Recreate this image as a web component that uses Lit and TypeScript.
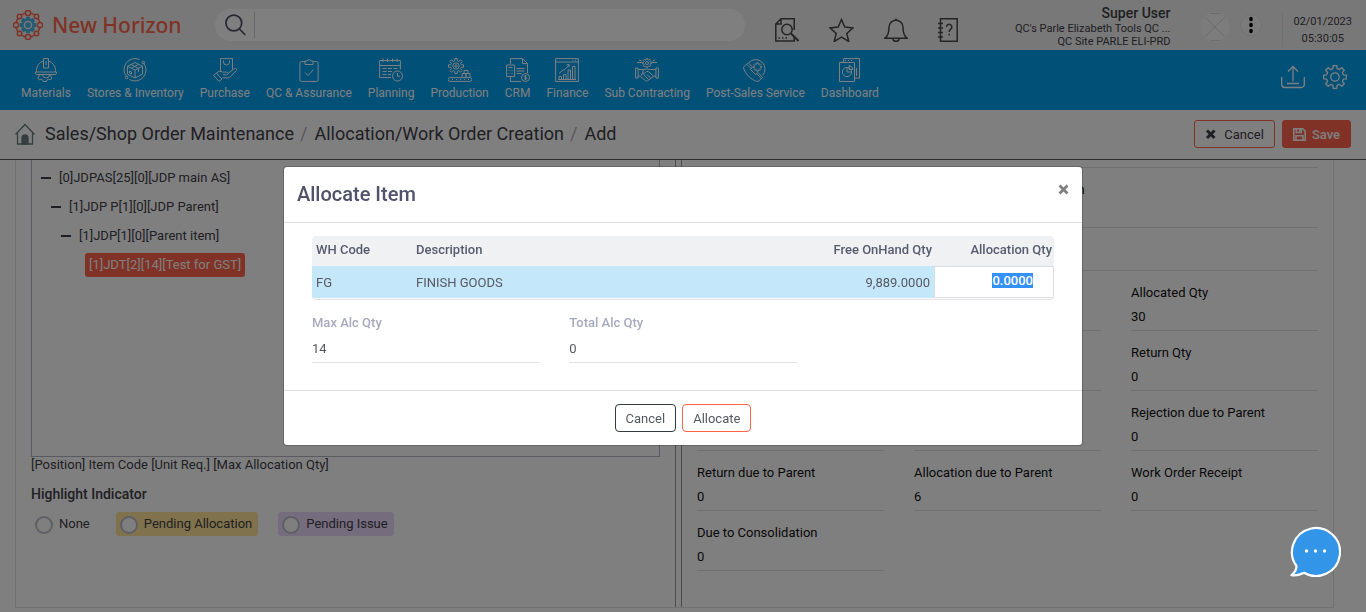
import { LitElement, html, css, svg } from "lit";
import { customElement, query } from "lit/decorators.js";

const gear = (cx: number, cy: number, r: number, teeth: number, depth: number) => {
  const pts: string[] = [];
  const step = (Math.PI * 2) / teeth;
  for (let i = 0; i < teeth; i++) {
    const a = i * step - Math.PI / 2;
    const at = (ang: number, rad: number) =>
      `${(cx + Math.cos(ang) * rad).toFixed(2)} ${(cy + Math.sin(ang) * rad).toFixed(2)}`;
    pts.push(at(a - step * 0.3, r - depth), at(a - step * 0.2, r), at(a + step * 0.2, r), at(a + step * 0.3, r - depth));
  }
  return `M${pts.join("L")}Z`;
};

const ring = (n: number, cx: number, cy: number, r: number, dot: number) =>
  Array.from({ length: n }, (_, i) => {
    const a = (i * Math.PI * 2) / n;
    return svg`<circle cx=${cx + Math.cos(a) * r} cy=${cy + Math.sin(a) * r} r=${i % 2 ? dot - 0.4 : dot}/>`;
  });

const icons: Record<string, unknown> = {
  materials: svg`<path d="M2.500 14v-1.500a9.500 9.500 0 0 1 7-9.500M14.500 3a9.500 9.500 0 0 1 7 9.500V14M1.500 14h21v1.200a1.300 1.300 0 0 1-1.300 1.300H2.800a1.300 1.300 0 0 1-1.300-1.300zM9.500.6h5v9.400h-5zM12 3v4"/><path d="M5 16.500v2.200l-1.300 1 1.500 2.200 1.800-.8 1.800 1.100.4 1.300h3.200l.4-1.300 1.800-1.100 1.900.8 1.500-2.200-1.300-1 0-2.200M8.500 16.500a3.500 3.500 0 0 0 7 0"/>`,
  stores: svg`<path d="M3.500 18.500A11 11 0 0 1 16.500 1.500M20.500 5a11 11 0 0 1-14 16.500"/><circle cx="20.300" cy="4.500" r="1.300"/><circle cx="3.700" cy="19.500" r="1.300"/><path d="M12 4.500l7.500 3.700v8L12 20l-7.500-3.800v-8zM4.500 8.200l7.500 4 7.500-4M12 12.200V20M8 6.400l7.500 4v3.600M15.600 6.300l-7.400 4M6.500 13v2l2 1v-2z"/>`,
  purchase: svg`<path d="M7.500 13V.6h12v11M10.500 2.500v1.500a3 3 0 0 0 6 0V2.500M.6 17.500l2.900-2.400 5.500 5.900-2.900 2.400zM3.500 15.100c2-2 4-2.100 6-1h4c2 0 2.200 2.500 0 2.600H10M15 15.500l6.500-5c1.500-.7 2.700.8 1.700 2l-5.700 6.300c-.8.7-1.500 1-2.500 1H9.500"/>`,
  qc: svg`<path d="M8 3.600H4.400a1.500 1.500 0 0 0-1.500 1.500v16.800a1.500 1.500 0 0 0 1.500 1.500h15.200a1.500 1.500 0 0 0 1.500-1.500V5.100a1.500 1.500 0 0 0-1.500-1.500H16M8 6.500V3h2.200a1.900 1.900 0 0 1 3.600 0H16v3.500zM8 14.500l3 3 5.500-6"/>`,
  planning: svg`<path d="M12 19.500H.6V2.500h20.800v9M.6 7.500h20.800M4 .5v3.500M8.500.5v3.500M13.500.5v3.500M18 .5v3.500M3.500 10.500h4M9 10.500h4M14.500 10.500h4M3.500 13.500h4M9 13.500h4M3.500 16.500h4M9 16.500h3"/><circle cx="18.500" cy="18" r="5"/><path d="M18.500 15v3.300h2.500"/>`,
  production: svg`<path d=${gear(8, 8, 7.6, 8, 2.2)} /><circle cx="8" cy="8" r="3.200"/><circle cx="8" cy="8" r="1.200"/><path d="M2 19.600h20a1.800 1.800 0 0 1 0 3.800H2a1.800 1.800 0 0 1 0-3.800zM14 19.500v-4h4v4M18 19.500v-4h4v4M16 15.500v-3h4v3M4 21.500h1M8 21.500h1M12 21.500h1M16 21.500h1M20 21.500h1"/>`,
  crm: svg`<path d="M4.500 6V.6h12l5 5V15M16.500.6v5h5M15 23.400H4.500V19M10.500 10.500h8M10.500 13h8M10.500 15.500h5M.6 7h8v11.500h-8zM2.500 9.500h4M2.500 12.500h1M5.500 12.500h1M2.500 15.500h1M5.500 15.500h1"/><circle cx="19.500" cy="19.500" r="4"/><path d="M20.700 18c-1.200-.9-2.500-.3-2.300.6.200 1 2.200.7 2.300 1.700 0 1-1.500 1.400-2.500.5M19.500 16.800v5.400"/>`,
  finance: svg`<path d="M.6.600h22.800v22.800H.6zM.6 4h22.800M17.500 2.300h1M20 2.300h1M3 21.500h18M4 21.500v-3h2.500v3M8.500 21.500v-5H11v5M13 21.500V12h2.500v9.500M17.500 21.500v-13H20v13M4 15.500l4-3.500 2-.5 4-4.500M11.500 6.800l2.700-.2-.2 2.700"/>`,
  sub: svg`<path d=${gear(12, 5, 4.6, 8, 1.200)} /><circle cx="12" cy="5" r="1.500"/><path d="M2 4.500h5M4 2l2.500 1M17 4.500h5M20 2l-2.500 1M.6 10h2.500v10H.6zM20.900 10h2.500v10h-2.500zM3.100 11.500h5l3.500-.5 4 .5h5.300M3.100 18h2l5.500 4.800c1 .5 1.700.2 2.400-.3l6-4.500h1.900M8.500 11.500l-1 3.500c1.500 1 3-.2 3.800-1.500h2l5.200 4.500M12 16.500l3.500 3.500M10 18l3.500 3.500M6 17l2-1.500 2 2.500"/>`,
  service: svg`<path d="M6 4.500A9.300 9.300 0 1 1 19.500 17.300M5.200 4.800L1.500 8a2.800 2.800 0 0 0-.7 3C3 16.500 8 21.500 13.500 23.300a2.800 2.800 0 0 0 2.700-.6l3.300-3.400-4.500-4.800-2.500 2-5-5L9.500 9zM3.700 6.200l4.300 4.300M13.800 15.700l4.300 4.700"/><path d=${gear(14.5, 9, 4.300, 8, 1.300)} />`,
  dashboard: svg`<path d="M1.500 4.500h15v19h-15zM5.500 4.500V.6h16v19.500h-5M18.500 10v8M7 2.500h1M10 2.500h1M13 2.500h1"/><circle cx="9" cy="14" r="4.600"/><path d="M9 9.400V14h4.600M11 7.500a5 5 0 0 1 4 4h-4z"/>`,
};

const modules: [string, string][] = [
  ["materials", "Materials"],
  ["stores", "Stores & Inventory"],
  ["purchase", "Purchase"],
  ["qc", "QC & Assurance"],
  ["planning", "Planning"],
  ["production", "Production"],
  ["crm", "CRM"],
  ["finance", "Finance"],
  ["sub", "Sub Contracting"],
  ["service", "Post-Sales Service"],
  ["dashboard", "Dashboard"],
];

const base = css`
  *, *::before, *::after { box-sizing: border-box; }
  button, input { font: inherit; color: inherit; margin: 0; }
  button { cursor: pointer; }
  a { color: inherit; text-decoration: none; }
  svg { display: block; fill: none; stroke: currentColor; }
`;

@customElement("app-header")
class AppHeader extends LitElement {
  static styles = [base, css`
    :host { display: flex; align-items: center; height: 50px; background: #f1f1f1; color: #3f4047; }
    .brand { display: flex; align-items: center; gap: 9px; padding-left: 13px; width: 215px; color: #ff644a; font: 500 21px/30px "Noto Sans", sans-serif; white-space: nowrap; }
    .search { display: flex; align-items: center; flex: 0 1 530px; height: 32px; border-radius: 16px; background: #fff; padding-left: 10px; margin-right: 30px; color: #4c4f66; }
    .search button { border: 0; background: none; padding: 0; }
    .search input { flex: 1; min-width: 0; height: 26px; margin: 0 20px 0 8px; border: 0; border-left: 1px solid #cfcfd6; background: none; outline: 0; }
    .tools { display: flex; gap: 30px; padding-top: 10px; color: #484848; }
    .tools button { padding: 0; border: 0; background: none; }
    .user { margin-left: auto; padding-top: 2px; text-align: right; font-size: 11px; line-height: 13px; white-space: nowrap; }
    .name { font-size: 14px; line-height: 18px; font-weight: 500; }
    .avatar { margin: 4px 10px 0 30px; color: #d8d8d8; }
    .menu { display: grid; place-items: center; width: 22px; height: 22px; padding: 0; border: 1px solid #e6e6e6; border-radius: 50%; background: #f6f6f6; color: #000; }
    .clock { margin-left: 20px; padding: 0 14px 0 10px; border-left: 1px solid #e2e2e2; font-size: 11px; line-height: 17px; text-align: center; margin-top: 10px; }
  `];
  render() {
    return html`
      <a class="brand" href="#">
        <svg width="30" height="30" viewBox="0 0 30 30" stroke-width="1.500">
          <circle cx="15" cy="15" r="12"/>
          <g fill="#f1f1f1">${ring(8, 15, 15, 12, 2.600)}</g>
          <g stroke="#4cb8e6"><path fill="#4cb8e6" d=${gear(15, 15, 7.600, 8, 1.500)} /><circle cx="15" cy="15" r="3.600" stroke="#f1f1f1"/></g>
        </svg>
        <span>New Horizon</span>
      </a>
      <div class="search">
        <button aria-label="Search"><svg width="21" height="22" viewBox="0 0 21 22" stroke-width="1.700"><circle cx="8.800" cy="9" r="7.900"/><path d="M14.500 15l5.800 6"/></svg></button>
        <input type="text" aria-label="Search text" />
      </div>
      <div class="tools">
        <button aria-label="Document search"><svg width="24" height="24" viewBox="0 0 24 24" stroke-width="1.500"><path d="M19.200 18v5H.8V6L6 .8h13.200V12M.8 6H6V.8M3.500 20h1.500M7 20h1.500M10.500 20H12"/><circle cx="12" cy="11.500" r="5.200"/><path d="M16 15.500l7.500 7.500" stroke-width="2"/></svg></button>
        <button aria-label="Favourites"><svg width="25" height="24" viewBox="0 0 25 24" stroke-width="1.500"><path d="M12.500 1.500l3.300 7.600 8.200.8-6.200 5.500 1.900 8-7.200-4.300-7.200 4.300 1.900-8L1 9.900l8.200-.8z"/></svg></button>
        <button aria-label="Notifications"><svg width="24" height="24" viewBox="0 0 24 24" stroke-width="1.500"><path d="M1 20.200h22c-3-2.500-4-5-4-11a7 7 0 0 0-14 0c0 6-1 8.500-4 11zM9 20.500a3 2.800 0 0 0 6 0M11 1.500h2"/></svg></button>
        <button aria-label="Help"><svg width="24" height="24" viewBox="0 0 24 24" stroke-width="1.500"><path d="M2.500.8h16.700v22.400H2.500zM0 5.500h5M0 10h5M0 14.500h5M0 19h5M8.500 9a2.700 2.700 0 1 1 4.200 2.200c-1.200.8-1.500 1.300-1.500 2.800M11.200 15.800v1.700"/></svg></button>
      </div>
      <div class="user">
        <div class="name">Super User</div>
        <div>QC's Parle Elizabeth Tools QC ...</div>
        <div>QC Site PARLE ELI-PRD</div>
      </div>
      <svg class="avatar" width="30" height="30" viewBox="0 0 30 30"><circle cx="15" cy="15" r="14.500" fill="#f8f8f8" stroke="#f8f8f8"/><path d="M5 5l20 20M25 5L5 25M10 1.500h10M10 28.500h10"/></svg>
      <button class="menu" aria-label="More"><svg width="4" height="18" viewBox="0 0 4 18"><g stroke="none" fill="#000"><ellipse cx="2" cy="3" rx="1.800" ry="2.200"/><ellipse cx="2" cy="9" rx="1.800" ry="2.200"/><ellipse cx="2" cy="15" rx="1.800" ry="2.200"/></g></svg></button>
      <div class="clock"><div>02/01/2023</div><div>05:30:05</div></div>
    `;
  }
}

@customElement("app-nav")
class AppNav extends LitElement {
  static styles = [base, css`
    :host { display: flex; height: 60px; padding: 0 19px 0 21px; background: #00a0f0; color: #fff; }
    nav { display: flex; gap: 16px; padding-top: 8px; }
    .item { display: flex; flex-direction: column; align-items: center; gap: 3px; font-size: 12px; line-height: 16px; white-space: nowrap; }
    .side { display: flex; align-items: center; gap: 18px; margin-left: auto; padding-bottom: 6px; }
    .side button { padding: 0; border: 0; background: none; }
  `];
  render() {
    return html`
      <nav>
        ${modules.map(([icon, label]) => html`
          <a class="item" href="#">
            <svg width="24" height="24" viewBox="0 0 24 24">${icons[icon]}</svg>
            <span>${label}</span>
          </a>`)}
      </nav>
      <div class="side">
        <button aria-label="Upload"><svg width="24" height="24" viewBox="0 0 24 24" stroke-width="1.300"><path d="M.7 12v7.500a3 3 0 0 0 3 3h16.600a3 3 0 0 0 3-3V12M12 16.500V1.500M7 6.500l5-5 5 5M6 18.500h12"/></svg></button>
        <button aria-label="Settings"><svg width="24" height="24" viewBox="0 0 24 24" stroke-width="1.300" stroke-linejoin="round"><path d=${gear(12, 12, 11.500, 8, 2.800)} /><circle cx="12" cy="12" r="4.200"/></svg></button>
      </div>
    `;
  }
}

@customElement("app-title-bar")
class AppTitleBar extends LitElement {
  static styles = [base, css`
    :host { display: flex; align-items: center; height: 50px; padding: 0 15px 1px; background: #fff; border-bottom: 1px solid #5a5a5a; color: #3f4047; }
    .home { margin-right: 10px; color: #6b7c80; }
    .crumbs { display: flex; gap: 6px; margin: 0; padding: 0; list-style: none; font-size: 18px; line-height: 24px; white-space: nowrap; }
    .crumbs li { display: flex; gap: 7px; }
    .crumbs li + li::before { content: "/"; color: #b0b0b8; }
    .actions { display: flex; gap: 7px; margin-left: auto; }
    .btn { display: flex; align-items: center; gap: 8px; height: 28px; padding: 1px 10px 0; border: 1px solid #ff644a; border-radius: 3px; background: #fff; font-size: 13px; }
    .primary { background: #ff644a; color: #fff; font-weight: 500; gap: 6px; }
  `];
  render() {
    return html`
      <a class="home" href="#" aria-label="Home"><svg width="20" height="22" viewBox="0 0 20 22" stroke-width="1.300"><path d="M.5 11.500L10 1.500l9.500 10M2.500 10v11h15V10"/><path d="M7 21v-6a3 3 0 0 1 6 0v6z" fill="#6b7c80"/></svg></a>
      <ol class="crumbs">
        <li><a href="#">Sales/Shop Order Maintenance</a></li>
        <li><a href="#">Allocation/Work Order Creation</a></li>
        <li>Add</li>
      </ol>
      <div class="actions">
        <button class="btn"><svg width="11" height="11" viewBox="0 0 11 11" stroke-width="3"><path d="M2 1.500l7.500 7.500M9.500 1.500L2 9"/></svg>Cancel</button>
        <button class="btn primary"><svg width="13" height="13" viewBox="0 0 13 13" stroke-width="1.600"><path d="M.8.800h9l2.400 2.400v9H.8zM3.300 1v3.500h5V1M3 12V7.800h7V12M6.800 1.500v2"/></svg>Save</button>
      </div>
    `;
  }
}

@customElement("order-workspace")
class OrderWorkspace extends LitElement {
  static styles = [base, css`
    :host { display: block; padding: 0 32px 4px 15px; background: #fff; color: #3f4047; }
    .panel { display: grid; grid-template-columns: 661fr 658fr; height: 100%; min-height: 448px; border: 1px solid #e0e1e6; border-top: 0; }
    .left { border-right: 1px solid #9a9a9a; padding: 0 15px; }
    .right { margin-left: 5px; border-left: 1px solid #9a9a9a; padding: 0 15px; color: #111; }
    .tree { height: 297px; margin: 0; padding: 3px 9px; border: 1px solid #b4b5c0; border-top: 0; list-style: none; }
    .node { display: flex; align-items: center; gap: 8px; height: 29px; }
    .l1 { padding-left: 10px; }
    .l2 { padding-left: 20px; }
    .l3 { padding-left: 44px; }
    .toggle { width: 10px; height: 10px; padding: 0; border: 0; background: linear-gradient(currentColor, currentColor) center / 10px 2px no-repeat; }
    .picked { height: 24px; padding: 0 4px; border-radius: 3px; background: #ff644a; color: #fff; line-height: 24px; }
    .hint { line-height: 16px; }
    .legend { padding: 0; margin: 0; font-size: 14px; line-height: 20px; font-weight: 500; }
    fieldset { margin: 11px 0 0; padding: 0; border: 0; }
    .options { display: flex; gap: 20px; padding-top: 8px; }
    .option { display: flex; align-items: center; gap: 6px; height: 24px; padding: 0 6px 0 4px; border-radius: 3px; }
    .allocation { background: #ffe599; }
    .issue { background: #ead8fa; }
    .option input { appearance: none; width: 18px; height: 18px; margin-top: 1px; border: 2px solid #bdbec8; border-radius: 50%; background: #fff; }
    .fields { display: grid; grid-template-columns: repeat(3, 1fr); column-gap: 30px; }
    .field { height: 60px; padding-top: 13px; border-bottom: 1px solid #e0e0e4; line-height: 18px; }
    .field output { display: block; margin-top: 6px; }
    .wide { grid-column: span 2; }
    .edge { height: 8px; border-bottom: 1px solid #e0e0e4; }
    .group { height: 43px; border-bottom: 1px solid #e0e0e4; }
  `];
  private field(label: string, value: string, cls = "") {
    if (!label) return html`<div class="field"></div>`;
    const id = label.toLowerCase().replace(/\W+/g, "-");
    return html`<div class="field ${cls}"><label for=${id}>${label}</label><output id=${id}>${value}</output></div>`;
  }
  render() {
    return html`
      <div class="panel">
        <section class="left">
          <ul class="tree">
            <li class="node"><button class="toggle" aria-label="Collapse"></button>[0]JDPAS[25][0][JDP main AS]</li>
            <li class="node l1"><button class="toggle" aria-label="Collapse"></button>[1]JDP P[1][0][JDP Parent]</li>
            <li class="node l2"><button class="toggle" aria-label="Collapse"></button>[1]JDP[1][0][Parent item]</li>
            <li class="node l3"><span class="picked">[1]JDT[2][14][Test for GST]</span></li>
          </ul>
          <div class="hint">[Position] Item Code [Unit Req.] [Max Allocation Qty]</div>
          <fieldset>
            <legend class="legend">Highlight Indicator</legend>
            <div class="options">
              <label class="option"><input type="radio" name="hl" />None</label>
              <label class="option allocation"><input type="radio" name="hl" />Pending Allocation</label>
              <label class="option issue"><input type="radio" name="hl" />Pending Issue</label>
            </div>
          </fieldset>
        </section>
        <section class="right">
          <div class="edge"></div>
          <div class="fields">
            ${this.field("", "")}
            ${this.field("Quantity due to Consolidation", "", "wide")}
          </div>
          <div class="group"></div>
          <div class="fields">
            ${this.field("", "")}
            ${this.field("", "")}
            ${this.field("Allocated Qty", "30")}
            ${this.field("", "")}
            ${this.field("", "")}
            ${this.field("Return Qty", "0")}
            ${this.field("", "")}
            ${this.field("", "")}
            ${this.field("Rejection due to Parent", "0")}
            ${this.field("Return due to Parent", "0")}
            ${this.field("Allocation due to Parent", "6")}
            ${this.field("Work Order Receipt", "0")}
            ${this.field("Due to Consolidation", "0")}
          </div>
        </section>
      </div>
    `;
  }
}

@customElement("allocate-dialog")
class AllocateDialog extends LitElement {
  @query(".qty") qty!: HTMLInputElement;
  static styles = [base, css`
    :host { position: fixed; inset: 0; display: flex; align-items: center; justify-content: center; padding-bottom: 1px; background: rgba(0, 0, 0, 0.5); color: #575962; }
    .dialog { width: 100%; max-width: 800px; border: 1px solid rgba(0, 0, 0, 0.2); border-radius: 4px; background: #fff; background-clip: padding-box; }
    header { display: flex; justify-content: space-between; height: 56px; padding: 13px; border-bottom: 1px solid #dfe0e8; }
    h2 { margin: 0; font-size: 20px; line-height: 28px; font-weight: 500; color: #50526a; }
    .close { align-self: start; height: 20px; padding: 0; border: 0; background: none; color: #808080; }
    .body { padding: 13px 28px 27px; }
    .grid { border-bottom: 1px solid #e2e3e6; border-radius: 4px; overflow: hidden; padding-bottom: 1px; }
    table { width: 100%; border-collapse: collapse; table-layout: fixed; }
    th { height: 30px; padding: 0 4px 2px; background: #f0f1f3; color: #575b70; font-weight: 500; text-align: left; }
    td { height: 32px; padding: 2px 4px 0; background: #c4e7fa; }
    .code { width: 100px; }
    .edit { width: 120px; }
    th.num { text-align: right; padding-right: 2px; }
    td.num { text-align: right; }
    td.cell { padding: 0; background: #fff; }
    .qty { display: block; width: 100%; height: 32px; padding: 0 20px 2px 4px; border: 1px solid #dcdde0; background: #fff; text-align: right; font-weight: 500; outline: 0; }
    .qty::selection { background: #3390ff; color: #fff; }
    .fields { display: grid; grid-template-columns: repeat(3, 1fr); column-gap: 30px; padding-top: 14px; }
    .field { height: 49px; border-bottom: 1px solid #e0e1e5; line-height: 18px; }
    .field label { display: block; color: #a7aabf; font-weight: 500; }
    .field output { display: block; margin-top: 8px; }
    footer { display: flex; justify-content: center; gap: 6px; padding: 13px; border-top: 1px solid #dfe0e8; }
    .btn { height: 28px; padding: 2px 10px 0; border: 1px solid #343a40; border-radius: 4px; background: #fff; }
    .accent { border-color: #ff644a; }
  `];
  firstUpdated() {
    this.qty.focus();
    this.qty.select();
  }
  render() {
    return html`
      <div class="dialog" role="dialog" aria-labelledby="t">
        <header>
          <h2 id="t">Allocate Item</h2>
          <button class="close" aria-label="Close"><svg width="11" height="11" viewBox="0 0 11 11" stroke-width="2.800"><path d="M1.500 1.500l8 8M9.500 1.500l-8 8"/></svg></button>
        </header>
        <div class="body">
          <div class="grid">
            <table>
              <thead><tr><th class="code">WH Code</th><th>Description</th><th class="num">Free OnHand Qty</th><th class="num edit">Allocation Qty</th></tr></thead>
              <tbody><tr><td>FG</td><td>FINISH GOODS</td><td class="num">9,889.0000</td><td class="cell"><input class="qty" type="text" aria-label="Allocation Qty" value="0.0000" /></td></tr></tbody>
            </table>
          </div>
          <div class="fields">
            <div class="field"><label for="max">Max Alc Qty</label><output id="max">14</output></div>
            <div class="field"><label for="total">Total Alc Qty</label><output id="total">0</output></div>
          </div>
        </div>
        <footer>
          <button class="btn">Cancel</button>
          <button class="btn accent">Allocate</button>
        </footer>
      </div>
    `;
  }
}

@customElement("app-root")
class AppRoot extends LitElement {
  static styles = [base, css`
    :host { display: flex; flex-direction: column; height: 100vh; overflow: hidden; font: 13px/18px Roboto, sans-serif; background: #fff; }
    app-header, app-nav, app-title-bar { flex: none; }
    order-workspace { flex: 1; min-height: 0; }
    .chat { position: fixed; right: 25px; bottom: 35px; padding: 0; border: 0; background: none; color: #fff; }
  `];
  render() {
    return html`
      <app-header></app-header>
      <app-nav></app-nav>
      <app-title-bar></app-title-bar>
      <order-workspace></order-workspace>
      <allocate-dialog></allocate-dialog>
      <button class="chat" aria-label="Chat"><svg width="52" height="52" viewBox="0 0 52 52" stroke-width="2.200" stroke-linejoin="round"><path fill="#3395e8" d="M7.500 41A24 24 0 1 1 15 47.800C11 50 6.500 50.800 2.500 50.200 6 47.500 7.500 44.500 7.500 41z"/><g fill="#fff" stroke="none"><circle cx="17.500" cy="26" r="1.700"/><circle cx="26.500" cy="26" r="1.700"/><circle cx="35.500" cy="26" r="1.700"/></g></svg></button>
    `;
  }
}
